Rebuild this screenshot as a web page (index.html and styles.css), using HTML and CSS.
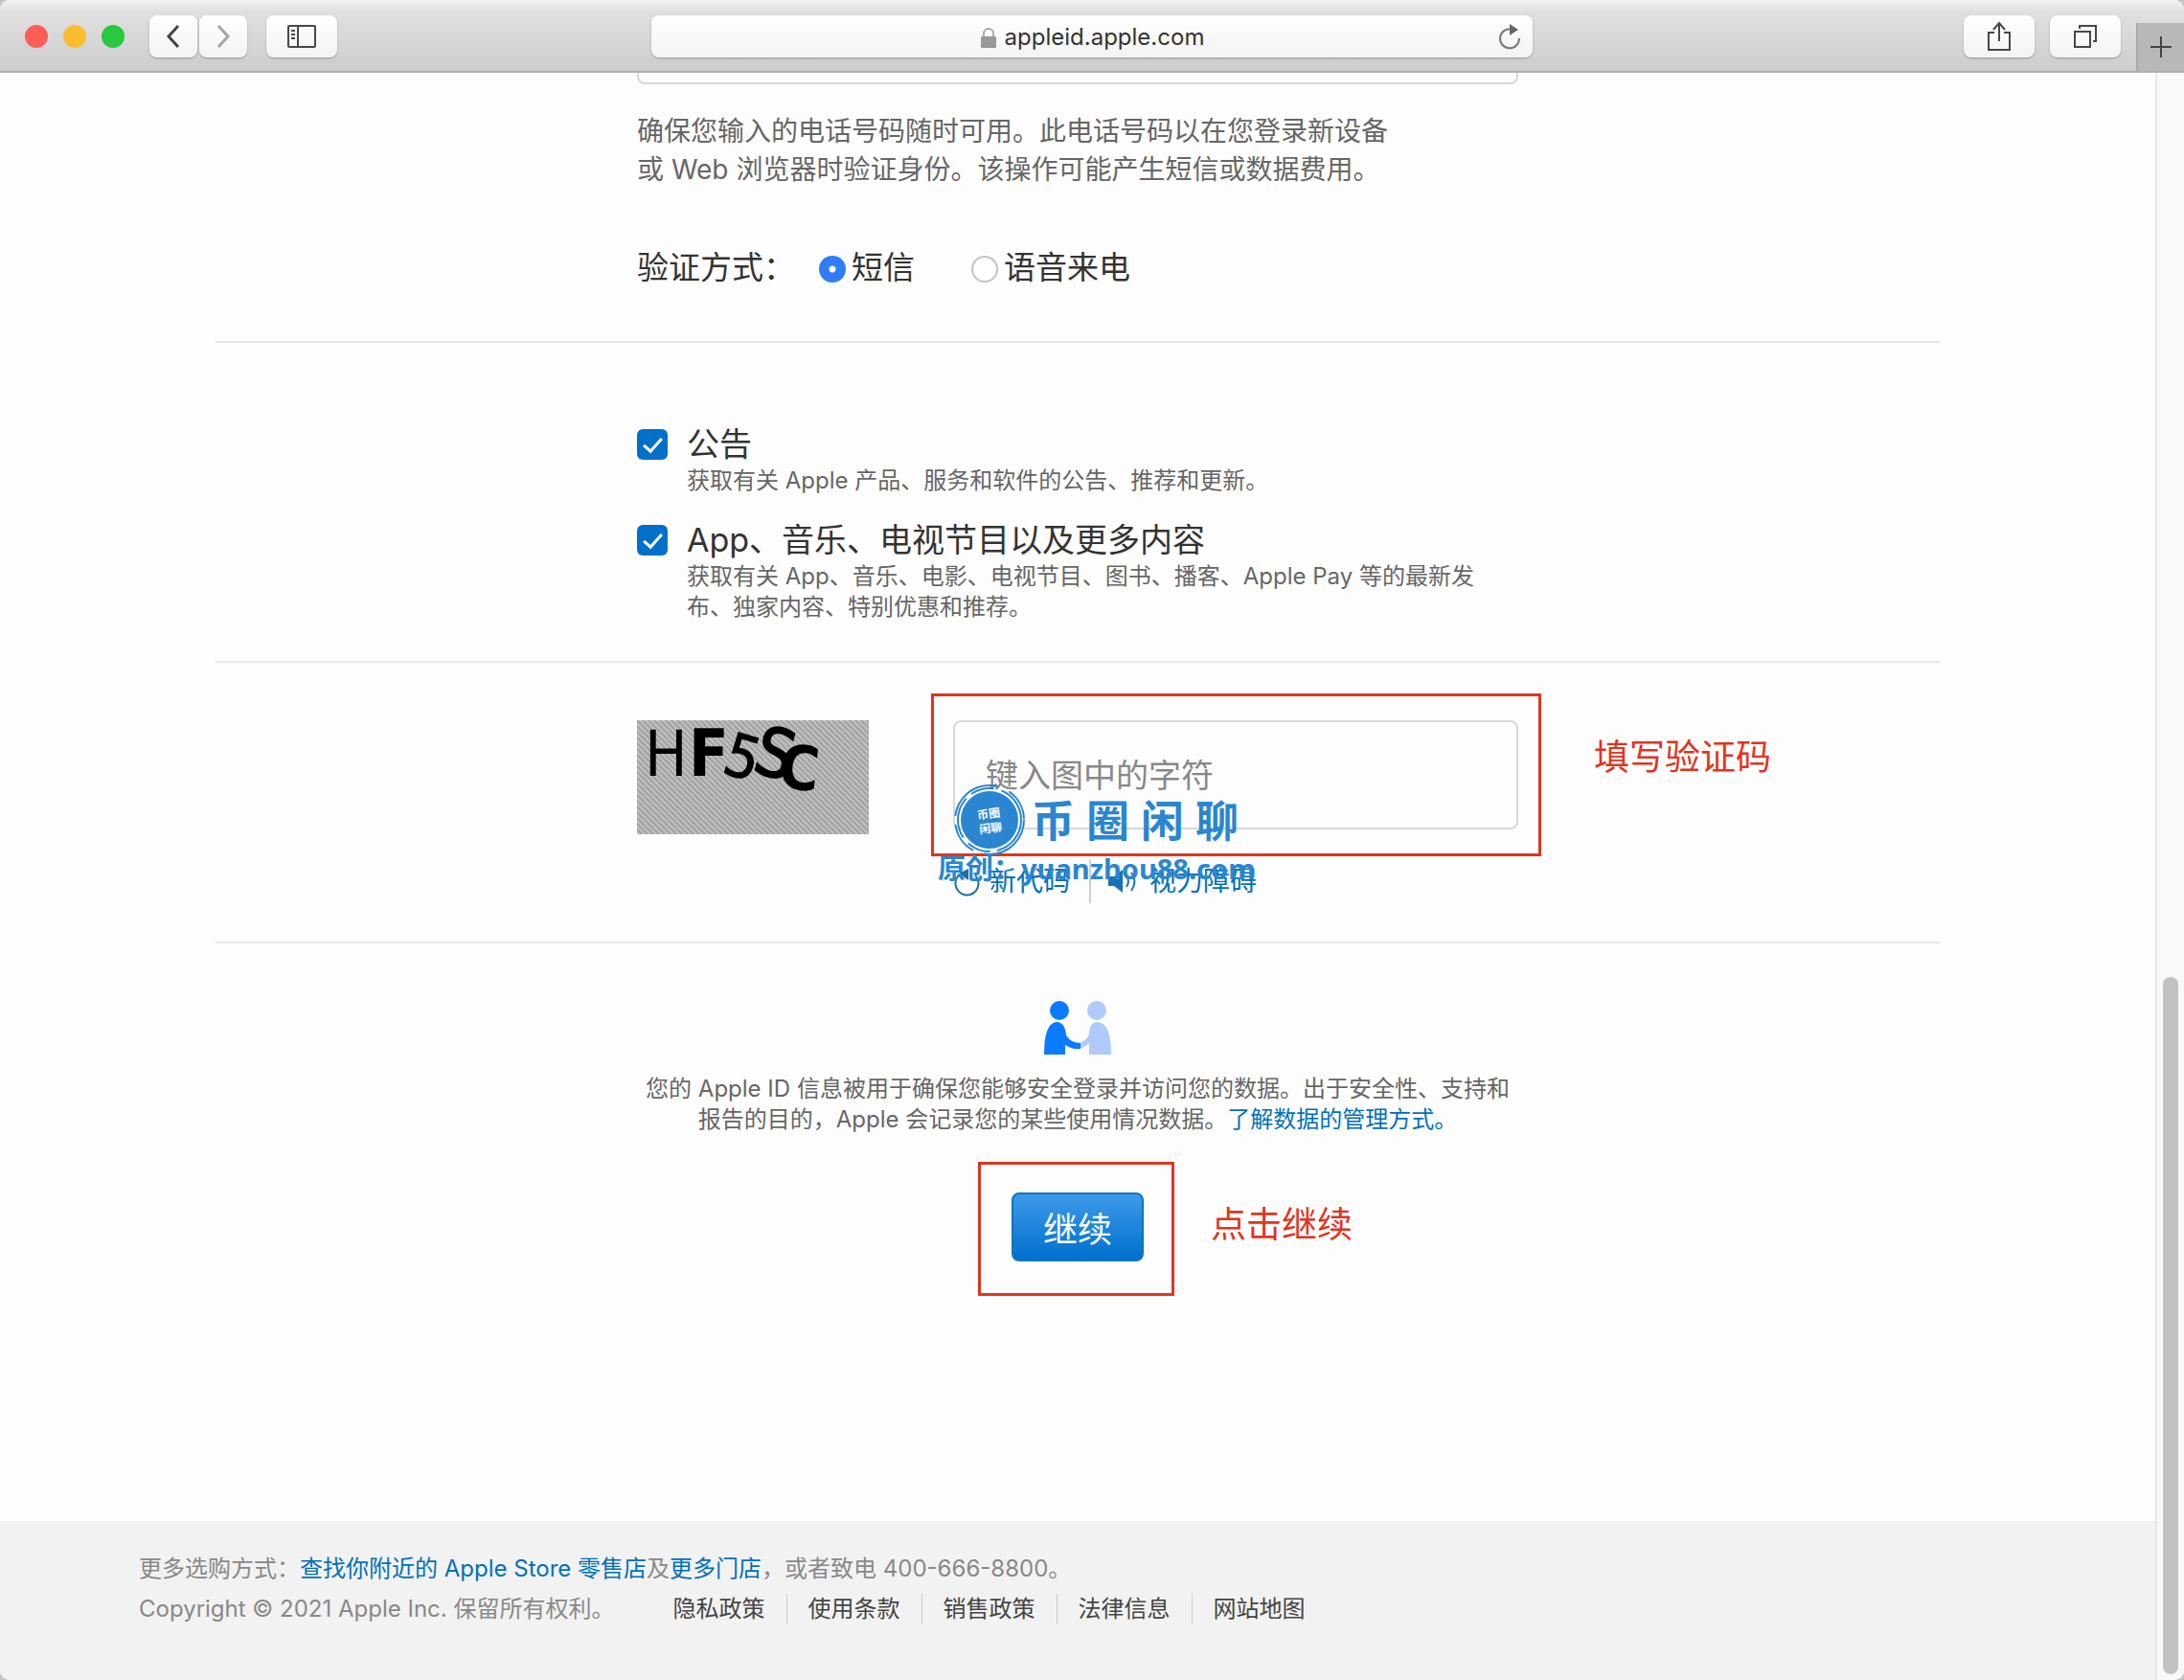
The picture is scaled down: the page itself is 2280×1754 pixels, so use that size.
FILE: index.html
```html
<!DOCTYPE html>
<html lang="zh-CN">
<head>
    <meta charset="UTF-8">
    <meta name="viewport" content="width=device-width, initial-scale=1.0">
    <title>Apple ID</title>
    <link rel="stylesheet" href="styles.css">
</head>
<body>

<div class="window">
    <header class="toolbar">
        <div class="toolbar-left">
            <div class="lights">
                <span class="light red"></span>
                <span class="light yellow"></span>
                <span class="light green"></span>
            </div>
            <div class="nav-buttons">
                <button class="tool-btn nav" aria-label="后退">
                    <svg width="16" height="24" viewBox="0 0 16 24"><path d="M13 1L3 12l10 11" fill="none" stroke="#444" stroke-width="3"/></svg>
                </button>
                <button class="tool-btn nav" aria-label="前进">
                    <svg width="16" height="24" viewBox="0 0 16 24"><path d="M3 1l10 11L3 23" fill="none" stroke="#a5a5a5" stroke-width="3"/></svg>
                </button>
            </div>
            <button class="tool-btn" aria-label="边栏">
                <svg width="32" height="26" viewBox="0 0 32 26"><g fill="none" stroke="#484848" stroke-width="2"><rect x="2" y="2" width="28" height="22" rx="1"/><path d="M12 2v22M5 7h4M5 11h4M5 15h4"/></g></svg>
            </button>
        </div>
        <div class="address">
            <svg width="18" height="24" viewBox="0 0 18 24"><path d="M4 11V8a5 5 0 0 1 10 0v3" fill="none" stroke="#aaa" stroke-width="2"/><rect x="1" y="11" width="16" height="12" rx="1" fill="#999"/></svg>
            <span>appleid.apple.com</span>
            <button class="reload" aria-label="重新载入">
                <svg width="26" height="28" viewBox="0 0 26 28"><path d="M15 5.500A10 10 0 1 0 23 15" fill="none" stroke="#777" stroke-width="2"/><path d="M13 0l9 6-9 6z" fill="#666"/></svg>
            </button>
        </div>
        <div class="toolbar-right">
            <button class="tool-btn" aria-label="共享">
                <svg width="26" height="32" viewBox="0 0 26 32"><path d="M8 12H2v18h22V12h-6M13 21V3M7 9l6-7 6 7" fill="none" stroke="#484848" stroke-width="2"/></svg>
            </button>
            <button class="tool-btn" aria-label="标签页概览">
                <svg width="26" height="26" viewBox="0 0 26 26"><path d="M2 8h16v16H2zM7 5V2h17v16h-3" fill="none" stroke="#484848" stroke-width="2"/></svg>
            </button>
            <button class="new-tab" aria-label="新建标签页">
                <svg width="24" height="24" viewBox="0 0 24 24"><path d="M12 1v22M1 12h22" stroke="#444" stroke-width="2"/></svg>
            </button>
        </div>
    </header>

    <div class="viewport">
        <div class="page">
            <main>
                <section class="phone">
                    <div class="column">
                        <div class="field-end"></div>
                        <p class="hint">确保您输入的电话号码随时可用。此电话号码以在您登录新设备<br>或 Web 浏览器时验证身份。该操作可能产生短信或数据费用。</p>
                        <div class="methods">
                            <span class="methods-title">验证方式：</span>
                            <label><input type="radio" name="method" checked>短信</label>
                            <label><input type="radio" name="method">语音来电</label>
                        </div>
                    </div>
                </section>

                <section class="subscriptions">
                    <div class="column">
                        <div class="option">
                            <input type="checkbox" id="news" checked>
                            <div>
                                <label for="news">公告</label>
                                <p>获取有关 Apple 产品、服务和软件的公告、推荐和更新。</p>
                            </div>
                        </div>
                        <div class="option">
                            <input type="checkbox" id="apps" checked>
                            <div>
                                <label for="apps">App、音乐、电视节目以及更多内容</label>
                                <p>获取有关 App、音乐、电影、电视节目、图书、播客、Apple Pay 等的最新发<br>布、独家内容、特别优惠和推荐。</p>
                            </div>
                        </div>
                    </div>
                </section>

                <section class="verify">
                    <div class="column captcha">
                        <svg class="captcha-image" width="242" height="119" viewBox="0 0 242 119">
                            <defs>
                                <pattern id="hatch" width="6" height="6" patternUnits="userSpaceOnUse">
                                    <rect width="6" height="6" fill="#c0c0c0"/>
                                    <path d="M-1-1l8 8M-1 5l2 2M5-1l2 2" stroke="#a2a2a2" stroke-width="2"/>
                                </pattern>
                            </defs>
                            <rect width="242" height="119" fill="url(#hatch)"/>
                            <g class="captcha-text">
                                <text x="8" y="58" font-size="66">H</text>
                                <text x="54" y="58" font-size="68" font-weight="bold">F</text>
                                <text transform="translate(87 54) rotate(17)" font-size="62" stroke="#000">5</text>
                                <text transform="translate(119 53) rotate(15)" font-size="70" stroke="#000" stroke-width="2">S</text>
                                <text transform="translate(146 70) rotate(6)" font-size="64" font-weight="bold">C</text>
                            </g>
                        </svg>
                        <div class="captcha-entry">
                            <div class="callout callout-input">
                                <input type="text" class="captcha-input" placeholder="键入图中的字符" aria-label="键入图中的字符">
                                <span class="callout-text">填写验证码</span>
                            </div>
                            <div class="captcha-links">
                                <a href="#">
                                    <svg width="28" height="32" viewBox="0 0 28 32"><path d="M7 9A12 12 0 1 0 23 10" fill="none" stroke="#1d6fa8" stroke-width="2"/><path d="M16 3v12L6 8z" fill="#1d6fa8"/></svg>
                                    新代码</a>
                                <a href="#">
                                    <svg width="34" height="28" viewBox="0 0 34 28"><path d="M1 9h6l9-7v24l-9-7H1z" fill="#1673b5"/><path d="M20 9q4 5 0 11M25 5q7 9 0 19" fill="none" stroke="#1673b5" stroke-width="2"/></svg>
                                    视力障碍</a>
                            </div>
                            <div class="watermark">
                                <div class="watermark-top">
                                    <svg width="76" height="76" viewBox="0 0 76 76">
                                        <circle cx="38" cy="38" r="30" fill="#2a86d0"/>
                                        <g fill="none" stroke="#2a86d0" stroke-width="2">
                                            <circle cx="38" cy="38" r="33" stroke-dasharray="44 7 25 8"/>
                                            <circle cx="38" cy="38" r="36" stroke-dasharray="62 12 34 9"/>
                                        </g>
                                        <g transform="rotate(-8 38 38)" fill="#fff" font-size="12" font-weight="bold" text-anchor="middle">
                                            <text x="38" y="36">币圈</text>
                                            <text x="38" y="51">闲聊</text>
                                        </g>
                                    </svg>
                                    <div class="watermark-name"><span>币</span><span>圈</span><span>闲</span><span>聊</span></div>
                                </div>
                                <div class="watermark-url">原创：yuanzhou88.com</div>
                            </div>
                        </div>
                    </div>
                </section>

                <section class="privacy">
                    <svg width="72" height="58" viewBox="0 0 72 58">
                        <g fill="#afcbfb"><circle cx="56" cy="11" r="10"/><path d="M37 45q7-1 11-9 0-13 9-13 14 1 14 34H48V45q-4 4-11 6z"/></g>
                        <g fill="#0a7aff"><circle cx="17" cy="11" r="10"/><path d="M1 57Q1 24 14 23q9 0 10 14 5 8 15 8v6q-9 1-16-4v10z"/></g>
                    </svg>
                    <p>您的 Apple ID 信息被用于确保您能够安全登录并访问您的数据。出于安全性、支持和<br>报告的目的，Apple 会记录您的某些使用情况数据。<a href="#">了解数据的管理方式。</a></p>
                    <div class="callout callout-button">
                        <button class="continue">继续</button>
                        <span class="callout-text">点击继续</span>
                    </div>
                </section>
            </main>

            <footer>
                <p>更多选购方式：<a href="#">查找你附近的 Apple Store 零售店</a>及<a href="#">更多门店</a>，或者致电 400-666-8800。</p>
                <div class="legal">
                    <span>Copyright © 2021 Apple Inc. 保留所有权利。</span>
                    <nav>
                        <a href="#">隐私政策</a>
                        <a href="#">使用条款</a>
                        <a href="#">销售政策</a>
                        <a href="#">法律信息</a>
                        <a href="#">网站地图</a>
                    </nav>
                </div>
            </footer>
        </div>
        <div class="scrollbar"><div class="thumb"></div></div>
    </div>
</div>

</body>
</html>
```
FILE: styles.css
```css
* {
    box-sizing: border-box;
}
body {
    margin: 0;
    background-color: #c4c4c4;
    color: #333;
    font-family: Inter, "Noto Sans CJK SC", sans-serif;
    font-size: 24px;
    line-height: 32px;
}
p {
    margin: 0;
}
a {
    color: #0070b8;
    text-decoration: none;
}
button,
input {
    font-family: inherit;
}
svg {
    display: block;
    flex: none;
}
.window {
    display: flex;
    flex-direction: column;
    min-height: 100vh;
    border-radius: 10px;
    overflow: hidden;
    background-color: #fdfdfd;
}

/* browser toolbar */
.toolbar {
    display: grid;
    grid-template-columns: 1fr minmax(0, 920px) 1fr;
    align-items: center;
    height: 76px;
    padding-top: 2px;
    background: linear-gradient(#f2f2f2, #e0e0e0 12px, #cdcdcd);
    border-bottom: 2px solid #b0b0b0;
}
.toolbar-left,
.toolbar-right,
.lights,
.nav-buttons {
    display: flex;
    align-items: center;
}
.toolbar-left {
    padding-left: 26px;
}
.lights {
    gap: 16px;
    margin-right: 26px;
}
.light {
    width: 24px;
    height: 24px;
    border-radius: 50%;
}
.red {
    background-color: #f95f57;
}
.yellow {
    background-color: #fbbd2e;
}
.green {
    background-color: #28c840;
}
.nav-buttons {
    gap: 2px;
    margin-right: 20px;
}
.tool-btn {
    display: flex;
    align-items: center;
    justify-content: center;
    width: 74px;
    height: 44px;
    padding: 0;
    border: none;
    border-radius: 8px;
    background: linear-gradient(#fff, #f3f3f3);
    box-shadow: 0 1px 2px rgba(0, 0, 0, 0.3);
}
.tool-btn.nav {
    width: 50px;
}
.address {
    position: relative;
    display: flex;
    align-items: center;
    justify-content: center;
    gap: 8px;
    height: 44px;
    padding-top: 2px;
    border-radius: 8px;
    background: linear-gradient(#fff, #f3f3f3);
    box-shadow: 0 1px 2px rgba(0, 0, 0, 0.3);
}
.reload {
    position: absolute;
    right: 11px;
    padding: 0;
    border: none;
    background: none;
}
.toolbar-right {
    justify-content: flex-end;
    gap: 16px;
}
.new-tab {
    display: flex;
    align-items: center;
    justify-content: center;
    align-self: flex-end;
    width: 50px;
    height: 50px;
    margin-top: 22px;
    padding: 0;
    border: none;
    border-left: 2px solid #a8a8a8;
    background-color: #b8b8b8;
}

/* page */
.viewport {
    display: flex;
    flex: 1;
}
.page {
    display: flex;
    flex-direction: column;
    flex: 1;
}
main {
    flex: 1;
}
section {
    width: 80%;
    max-width: 1800px;
    margin: 0 auto;
    border-bottom: 2px solid #e8e8e8;
}
.column {
    width: 920px;
    margin: 0 auto;
}
.phone {
    padding-bottom: 57px;
}
.field-end {
    height: 12px;
    border: 2px solid #d8d8d8;
    border-top: none;
    border-radius: 0 0 8px 8px;
}
.hint {
    margin: 29px 0 62px;
    color: #666;
    font-size: 28px;
    line-height: 40px;
}
.methods {
    display: flex;
    align-items: center;
    font-size: 33px;
    line-height: 40px;
}
.methods-title {
    width: 190px;
}
.methods label {
    display: flex;
    align-items: center;
    gap: 6px;
    margin-right: 59px;
}
input[type="radio"] {
    appearance: none;
    width: 28px;
    height: 28px;
    margin: 4px 0 0;
    border: 2px solid #c4c4c4;
    border-radius: 50%;
    background-color: #fff;
}
input[type="radio"]:checked {
    border: none;
    background: radial-gradient(circle, #fff 3px, #2f7cf6 4px);
}
.subscriptions {
    padding: 84px 0 40px;
}
.option {
    display: flex;
    gap: 20px;
}
.option + .option {
    margin-top: 24px;
}
.option label {
    display: block;
    font-size: 34px;
    line-height: 44px;
}
.option p {
    color: #666;
    white-space: nowrap;
}
input[type="checkbox"] {
    appearance: none;
    flex: none;
    width: 32px;
    height: 32px;
    margin: 6px 0 0;
    border-radius: 6px;
    background-color: #0070c9;
    display: grid;
    place-items: center;
}
input[type="checkbox"]:checked::before {
    content: "";
    width: 8px;
    height: 16px;
    margin-top: -4px;
    border: solid #fff;
    border-width: 0 3px 3px 0;
    transform: rotate(42deg);
}

/* captcha */
.verify {
    padding: 60px 0 40px;
}
.captcha {
    display: flex;
    justify-content: space-between;
}
.captcha-image {
    overflow: visible;
}
.captcha-text {
    font-family: "DejaVu Sans Condensed", "DejaVu Sans", sans-serif;
}
.captcha-entry {
    position: relative;
    width: 590px;
}
.captcha-input {
    display: block;
    width: 100%;
    height: 114px;
    padding: 0 32px;
    border: 2px solid #d8d8d8;
    border-radius: 8px;
    background-color: #fdfdfd;
    font-size: 34px;
}
.captcha-input::placeholder {
    color: #888;
}
.captcha-links {
    display: flex;
    margin-top: 31px;
    font-size: 28px;
    line-height: 46px;
}
.captcha-links a {
    display: flex;
    align-items: center;
    gap: 10px;
}
.captcha-links a + a {
    margin-left: 20px;
    padding-left: 17px;
    border-left: 2px solid #d0d0d0;
}
.callout {
    position: relative;
}
.callout::before {
    content: "";
    position: absolute;
    border: 3px solid #e0351f;
    pointer-events: none;
}
.callout-input::before {
    inset: -28px -24px -28px -23px;
}
.callout-button::before {
    inset: -32px -32px -36px -35px;
}
.callout-text {
    position: absolute;
    left: 100%;
    top: 50%;
    color: #e0351f;
    font-size: 37px;
    line-height: 44px;
    white-space: nowrap;
}
.callout-input .callout-text {
    margin: -40px 0 0 79px;
}
.callout-button .callout-text {
    margin: -24px 0 0 70px;
}
.watermark {
    position: absolute;
    left: -16px;
    top: 66px;
    color: #2a86d0;
    font-weight: bold;
}
.watermark-top {
    display: flex;
    align-items: center;
    gap: 6px;
    padding-left: 16px;
}
.watermark-name {
    display: flex;
    gap: 12px;
    padding-top: 4px;
    font-size: 45px;
    line-height: 60px;
}
.watermark-url {
    font-family: "Noto Sans", "Noto Sans CJK SC", sans-serif;
    font-size: 29px;
    line-height: 26px;
    white-space: nowrap;
}

/* privacy and submit */
.privacy {
    display: flex;
    flex-direction: column;
    align-items: center;
    padding: 59px 0 64px;
    border-bottom: none;
    color: #666;
    text-align: center;
}
.privacy p {
    margin: 19px 0 60px;
}
.continue {
    display: block;
    width: 138px;
    height: 72px;
    border: 2px solid #1273bd;
    border-radius: 8px;
    background: linear-gradient(#3d9aea, #0070cd);
    color: #fff;
    font-size: 36px;
}

footer {
    padding: 29px 145px 53px;
    background-color: #f2f2f2;
    color: #888;
    line-height: 42px;
}
.legal {
    display: flex;
}
.legal nav {
    display: flex;
    align-items: center;
    margin-left: 39px;
}
.legal nav a {
    padding: 0 22px;
    border-right: 1px solid #ccc;
    color: #444;
    line-height: 32px;
}
.legal nav a:last-child {
    border-right: none;
}

.scrollbar {
    display: flex;
    flex-direction: column;
    justify-content: flex-end;
    width: 30px;
    padding: 0 6px 6px;
    border-left: 2px solid #e8e8e8;
    background-color: #f9f9f9;
}
.thumb {
    width: 16px;
    height: 728px;
    border-radius: 8px;
    background-color: #c1c1c1;
}
```
